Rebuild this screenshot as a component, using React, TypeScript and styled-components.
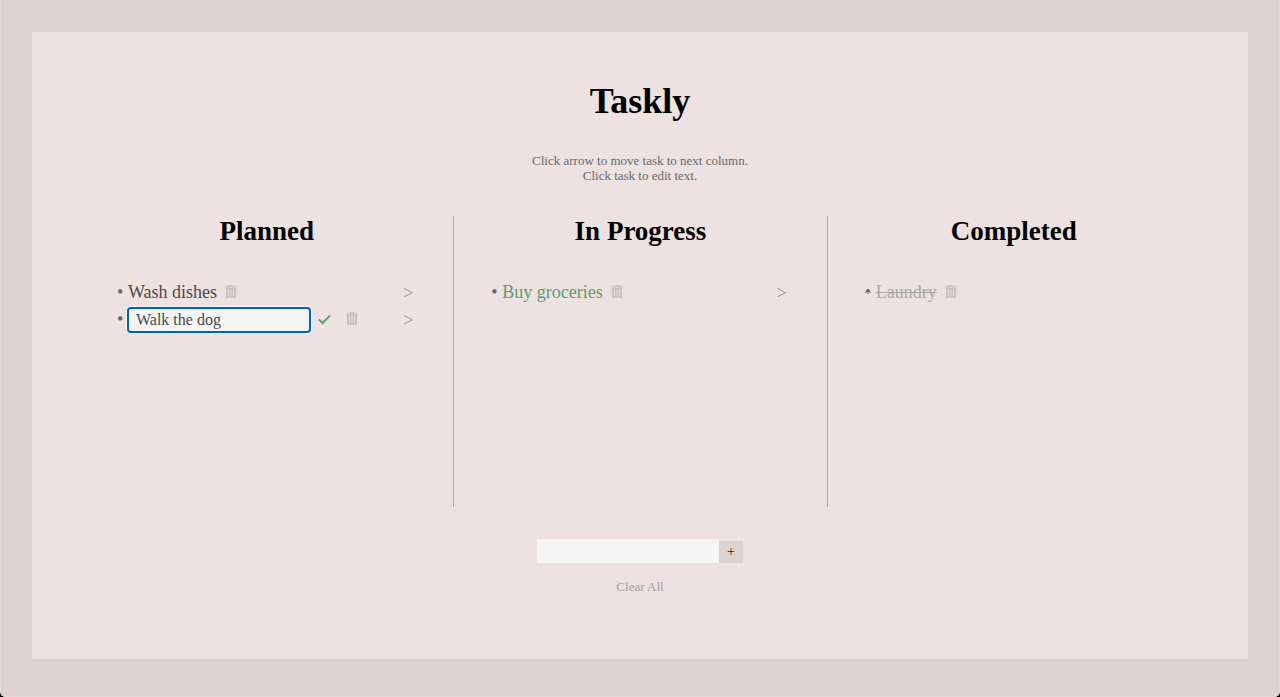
import React from "react";
import styled, { createGlobalStyle } from "styled-components";

const Global = createGlobalStyle`
  * { box-sizing: border-box; }
  html { background: #000; }
  body { margin: 0; font-family: "Liberation Serif", "Times New Roman", serif; color: #000; }
  button { cursor: pointer; }
`;

const Page = styled.div`
  min-height: 100vh;
  padding: 32px 32px 38px;
  display: flex;
  background: #ddd2ce;
  border-radius: 0 0 6px 6px;
  box-shadow: inset 0 -1px 0 #e3dad7, inset 1px 0 0 #e3dad7, inset -1px 0 0 #e3dad7;
`;

const Board = styled.main`
  flex: 1;
  padding: 48px 48px 60px;
  background: #ede1e1;
  display: flex;
  flex-direction: column;
  align-items: center;
`;

const Title = styled.h1`
  margin: 0;
  font-size: 36px;
  line-height: 42px;
`;

const Hint = styled.p`
  margin: 31px 0 33px;
  font-size: 13px;
  line-height: 15px;
  color: #696969;
  text-align: center;
`;

const Columns = styled.div`
  align-self: stretch;
  display: grid;
  grid-template-columns: repeat(3, 1fr);
`;

const Column = styled.section`
  min-height: 291px;
  padding: 0 40px 0 36px;
  & + & { border-left: 1px solid #a9a9a9; }
`;

const Heading = styled.h2`
  margin: 0 -4px 32px 0;
  font-size: 27px;
  line-height: 31px;
  text-align: center;
`;

const List = styled.ul`
  margin: 0;
  padding: 0;
  list-style: none;
`;

const Item = styled.li<{ $done?: boolean }>`
  display: flex;
  align-items: center;
  height: 27px;
  font-size: 18px;
  color: #696969;

  &::before {
    content: "•";
    width: 7px;
    margin: 0 4px 0 1px;
    text-decoration: ${(p) => (p.$done ? "line-through #a9a9a9" : "none")};
  }
`;

const Task = styled.span<{ $color: string; $done?: boolean }>`
  color: ${(p) => p.$color};
  text-decoration: ${(p) => (p.$done ? "line-through" : "none")};
`;

const IconButton = styled.button<{ $gap?: number }>`
  display: flex;
  margin-left: ${(p) => p.$gap ?? 8}px;
  padding: 0 0 2px;
  border: 0;
  background: none;
`;

const Next = styled.button`
  margin-left: auto;
  padding: 2px 0 0;
  border: 0;
  background: none;
  font: 18px "Liberation Serif", serif;
  color: #999;
`;

const Edit = styled.input`
  width: 184px;
  height: 26px;
  margin-left: -1px;
  padding: 0 7px;
  border: 2px solid #0060bf;
  border-radius: 4px;
  background: #f5f5f5;
  box-shadow: 0 0 0 1px #f8f3f4;
  font: 16px "Liberation Serif", serif;
  color: #4a4a4a;
  outline: none;
`;

const AddForm = styled.form`
  display: flex;
  align-items: flex-end;
  margin: 32px 0 16px;
`;

const NewTask = styled.input`
  width: 182px;
  height: 24px;
  padding: 0 8px;
  border: 0;
  background: #f5f5f5;
  font: 16px "Liberation Serif", serif;
`;

const Add = styled.button`
  width: 24px;
  height: 22px;
  padding: 0;
  border: 0;
  background: #ddd2ce;
  font: 14px "Liberation Serif", serif;
  color: #222;
`;

const Clear = styled.button`
  padding: 0;
  border: 0;
  background: none;
  font: 13px/15px "Liberation Serif", serif;
  color: #a0a0a0;
`;

const Trash = ({ gap }: { gap?: number }) => (
  <IconButton type="button" aria-label="Delete task" $gap={gap}>
    <svg width="12" height="13" viewBox="0 0 12 13">
      <path fill="#c8c2c2" d="M4 0h4l.6.7H12V1.8H0V.7h3.4z" />
      <path
        fill="#c8c2c2"
        fillRule="evenodd"
        d="M.8 2.3h10.4V12a1 1 0 0 1-1 1H1.8a1 1 0 0 1-1-1zM3.2 4.2v7h.8v-7zM5.6 4.2v7h.8v-7zM8 4.2v7h.8v-7z"
      />
    </svg>
  </IconButton>
);

const Check = () => (
  <IconButton type="button" aria-label="Save task" $gap={7}>
    <svg width="13" height="12" viewBox="0 0 13 12">
      <path d="M.9 6.4l3.6 3.6L12 2.6" fill="none" stroke="#5b9e6b" strokeWidth="2" />
    </svg>
  </IconButton>
);

const MoveNext = () => <Next type="button" aria-label="Move to next column">&gt;</Next>;

export default function App() {
  return (
    <>
      <Global />
      <Page>
        <Board>
          <Title>Taskly</Title>
          <Hint>
            Click arrow to move task to next column.
            <br />
            Click task to edit text.
          </Hint>
          <Columns>
            <Column>
              <Heading>Planned</Heading>
              <List>
                <Item>
                  <Task $color="#4a4a4a">Wash dishes</Task>
                  <Trash />
                  <MoveNext />
                </Item>
                <Item>
                  <Edit aria-label="Edit task" defaultValue="Walk the dog" />
                  <Check />
                  <Trash gap={15} />
                  <MoveNext />
                </Item>
              </List>
            </Column>
            <Column>
              <Heading>In Progress</Heading>
              <List>
                <Item>
                  <Task $color="#5b9e6b">Buy groceries</Task>
                  <Trash />
                  <MoveNext />
                </Item>
              </List>
            </Column>
            <Column>
              <Heading>Completed</Heading>
              <List>
                <Item $done>
                  <Task $color="#a9a9a9" $done>Laundry</Task>
                  <Trash />
                </Item>
              </List>
            </Column>
          </Columns>
          <AddForm>
            <NewTask aria-label="New task" />
            <Add type="button" aria-label="Add task">+</Add>
          </AddForm>
          <Clear type="button">Clear All</Clear>
        </Board>
      </Page>
    </>
  );
}
